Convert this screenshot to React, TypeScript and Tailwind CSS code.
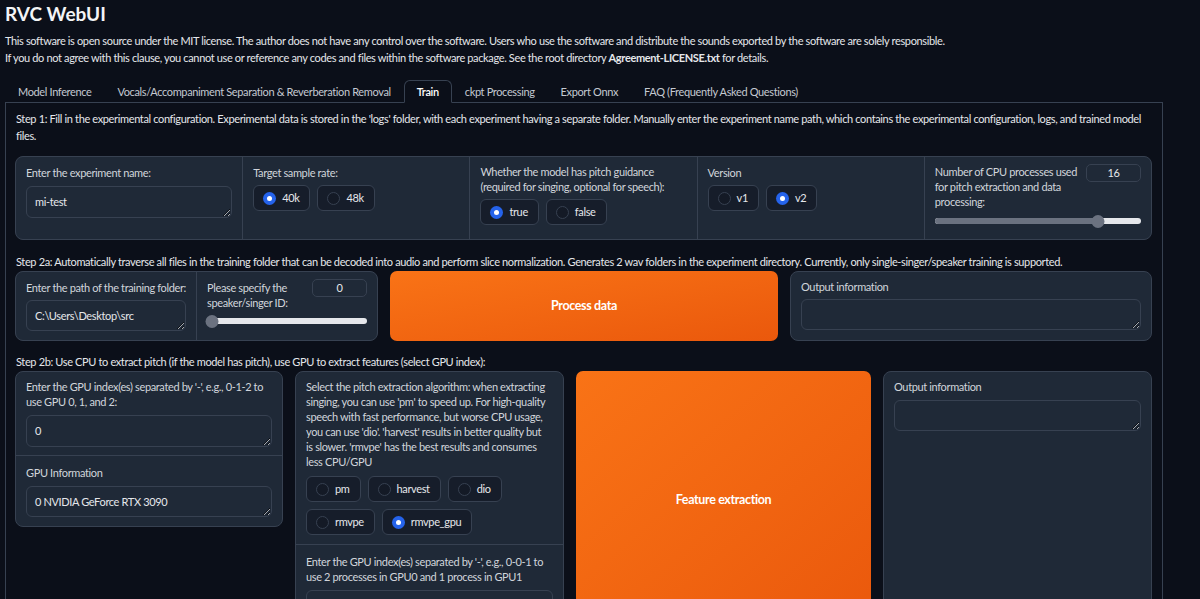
import { useState } from 'react';

const TABS = [
  'Model Inference',
  'Vocals/Accompaniment Separation & Reverberation Removal',
  'Train',
  'ckpt Processing',
  'Export Onnx',
  'FAQ (Frequently Asked Questions)',
];

function Radio({ label, checked, onSelect }: { label: string; checked: boolean; onSelect: () => void }) {
  return (
    <button
      onClick={onSelect}
      className="flex h-[26px] items-center gap-[6px] rounded-[6px] border border-[#374151] bg-[#161d2a] pl-[9px] pr-[10px] text-[#e5e7eb]"
    >
      <span
        className={`flex h-[13px] w-[13px] items-center justify-center rounded-full ${
          checked ? 'bg-[#2563eb]' : 'border border-[#374151] bg-[#141a26]'
        }`}
      >
        {checked && <span className="h-[5px] w-[5px] rounded-full bg-white" />}
      </span>
      {label}
    </button>
  );
}

function RadioGroup({ options, initial }: { options: string[]; initial: string }) {
  const [value, setValue] = useState(initial);
  return (
    <div className="flex flex-wrap gap-[7px]">
      {options.map((o) => (
        <Radio key={o} label={o} checked={value === o} onSelect={() => setValue(o)} />
      ))}
    </div>
  );
}

function Box({ value, h = 'h-[32px]' }: { value: string; h?: string }) {
  return (
    <textarea
      readOnly
      rows={1}
      value={value}
      className={`${h} w-full shrink-0 overflow-hidden rounded-[6px] border border-[#374151] bg-[#1f2937] px-[8px] py-[7px] leading-[16px] text-[#e5e7eb] outline-none [color-scheme:dark]`}
    />
  );
}

function NumberBox({ value }: { value: number }) {
  return (
    <div className="flex h-[18px] w-[55px] shrink-0 items-center justify-center rounded-[5px] border border-[#374151] text-[#e5e7eb]">
      {value}
    </div>
  );
}

function Slider({ value, min, max }: { value: number; min: number; max: number }) {
  const pct = ((value - min) / (max - min)) * 100;
  return (
    <div className="relative flex h-[20px] items-center">
      <div className="h-[6px] w-full rounded-full bg-[#e5e7eb]">
        <div className="h-full rounded-full bg-[#6b7280]" style={{ width: `${pct}%` }} />
      </div>
      <div
        className="absolute h-[13px] w-[13px] -translate-x-1/2 rounded-full bg-[#6b7280]"
        style={{ left: `calc(${pct}% + ${pct === 0 ? 5 : 0}px)` }}
      />
    </div>
  );
}

function Label({ children }: { children: React.ReactNode }) {
  return <div className="whitespace-nowrap leading-[15px] text-[#d1d5db]">{children}</div>;
}

function OrangeButton({ children, className }: { children: React.ReactNode; className: string }) {
  return (
    <button
      className={`${className} flex items-center justify-center rounded-[7px] bg-gradient-to-br from-[#f97316] to-[#ea580c] text-[12.5px] font-bold text-white`}
    >
      {children}
    </button>
  );
}

export default function App() {
  const [tab, setTab] = useState('Train');

  return (
    <div className="min-h-screen bg-[#0b0f19] pb-10 text-[11px] tracking-[-0.36px] text-[#e5e7eb] [font-family:Lato,'Noto_Sans',sans-serif]">
      <div className="ml-[5px] w-[1158px]">
        <h1 className="pt-[2px] text-[19px] font-bold leading-[24px] tracking-normal text-[#f3f4f6]">RVC WebUI</h1>
        <p className="mt-[6px] leading-[17px]">
          This software is open source under the MIT license. The author does not have any control over the software. Users who use the software and distribute the sounds exported by the software are solely responsible.
          <br />
          If you do not agree with this clause, you cannot use or reference any codes and files within the software package. See the root directory <b>Agreement-LICENSE.txt</b> for details.
        </p>

        {/* tab bar */}
        <div className="mt-[14px] flex border-b border-[#374151]">
          {TABS.map((t) => (
            <button
              key={t}
              onClick={() => setTab(t)}
              className={`-mb-px h-[23px] rounded-t-[6px] border px-[12px] leading-[21px] ${
                tab === t
                  ? 'border-[#374151] border-b-[#0b0f19] bg-[#0b0f19] font-semibold text-white'
                  : 'border-transparent text-[#c4c9d1]'
              }`}
            >
              {t}
            </button>
          ))}
        </div>

        <div className="border-x border-[#374151] pl-[9px] pr-[10px]">
          <p className="pl-px pt-[7px] leading-[17px]">
            Step 1: Fill in the experimental configuration. Experimental data is stored in the 'logs' folder, with each experiment having a separate folder. Manually enter the experiment name path, which contains the experimental configuration, logs, and trained model
            <br />
            files.
          </p>

          {/* step 1 settings */}
          <div className="mt-[12px] grid h-[84px] grid-cols-5 gap-px overflow-hidden rounded-[8px] border border-[#374151] bg-[#374151]">
            <div className="flex flex-col gap-[6px] bg-[#1f2937] px-[10px] pt-[8px]">
              <Label>Enter the experiment name:</Label>
              <Box value="mi-test" />
            </div>
            <div className="flex flex-col gap-[5px] bg-[#1f2937] px-[10px] pt-[8px]">
              <Label>Target sample rate:</Label>
              <RadioGroup options={['40k', '48k']} initial="40k" />
            </div>
            <div className="flex flex-col gap-[5px] bg-[#1f2937] px-[10px] pt-[7px]">
              <Label>
                Whether the model has pitch guidance
                <br />
                (required for singing, optional for speech):
              </Label>
              <RadioGroup options={['true', 'false']} initial="true" />
            </div>
            <div className="flex flex-col gap-[5px] bg-[#1f2937] px-[10px] pt-[8px]">
              <Label>Version</Label>
              <RadioGroup options={['v1', 'v2']} initial="v2" />
            </div>
            <div className="flex flex-col gap-[2px] bg-[#1f2937] px-[10px] pt-[7px]">
              <div className="flex items-start justify-between">
                <Label>
                  Number of CPU processes used
                  <br />
                  for pitch extraction and data
                  <br />
                  processing:
                </Label>
                <NumberBox value={16} />
              </div>
              <Slider value={16} min={1} max={20} />
            </div>
          </div>

          <p className="mt-[13px] pl-px leading-[17px]">
            Step 2a: Automatically traverse all files in the training folder that can be decoded into audio and perform slice normalization. Generates 2 wav folders in the experiment directory. Currently, only single-singer/speaker training is supported.
          </p>

          {/* step 2a */}
          <div className="mt-px flex h-[70px] gap-[12px]">
            <div className="grid w-[363px] grid-cols-2 gap-px overflow-hidden rounded-[8px] border border-[#374151] bg-[#374151]">
              <div className="flex flex-col gap-[5px] bg-[#1f2937] px-[10px] pt-[8px]">
                <Label>Enter the path of the training folder:</Label>
                <Box value={'C:\\Users\\Desktop\\src'} h="h-[31px]" />
              </div>
              <div className="flex flex-col bg-[#1f2937] px-[10px] pt-[7px]">
                <div className="flex items-start justify-between">
                  <div className="pt-px">
                    <Label>
                      Please specify the
                      <br />
                      speaker/singer ID:
                    </Label>
                  </div>
                  <NumberBox value={0} />
                </div>
                <div className="mt-px">
                  <Slider value={0} min={0} max={4} />
                </div>
              </div>
            </div>
            <OrangeButton className="w-[388px]">Process data</OrangeButton>
            <div className="flex flex-1 flex-col gap-[5px] rounded-[8px] border border-[#374151] bg-[#1f2937] px-[10px] pt-[7px]">
              <Label>Output information</Label>
              <Box value="" h="h-[31px]" />
            </div>
          </div>

          <p className="mt-[12px] pl-px leading-[17px]">
            Step 2b: Use CPU to extract pitch (if the model has pitch), use GPU to extract features (select GPU index):
          </p>

          {/* step 2b */}
          <div className="mt-px flex h-[258px] gap-[12px]">
            <div className="w-[268px] self-start overflow-hidden rounded-[8px] border border-[#374151] bg-[#1f2937]">
              <div className="flex flex-col gap-[6px] border-b border-[#374151] px-[10px] pb-[8px] pt-[7px]">
                <Label>
                  Enter the GPU index(es) separated by '-', e.g., 0-1-2 to
                  <br />
                  use GPU 0, 1, and 2:
                </Label>
                <Box value="0" />
              </div>
              <div className="flex flex-col gap-[6px] px-[10px] pb-[9px] pt-[9px]">
                <Label>GPU Information</Label>
                <Box value="0 NVIDIA GeForce RTX 3090" h="h-[31px]" />
              </div>
            </div>

            <div className="w-[269px] overflow-hidden rounded-[8px] border border-[#374151] bg-[#1f2937]">
              <div className="flex flex-col gap-[7px] border-b border-[#374151] px-[10px] pb-[9px] pt-[7px]">
                <Label>
                  Select the pitch extraction algorithm: when extracting
                  <br />
                  singing, you can use 'pm' to speed up. For high-quality
                  <br />
                  speech with fast performance, but worse CPU usage,
                  <br />
                  you can use 'dio'. 'harvest' results in better quality but
                  <br />
                  is slower. 'rmvpe' has the best results and consumes
                  <br />
                  less CPU/GPU
                </Label>
                <RadioGroup options={['pm', 'harvest', 'dio', 'rmvpe', 'rmvpe_gpu']} initial="rmvpe_gpu" />
              </div>
              <div className="flex flex-col gap-[6px] px-[10px] pt-[9px]">
                <Label>
                  Enter the GPU index(es) separated by '-', e.g., 0-0-1 to
                  <br />
                  use 2 processes in GPU0 and 1 process in GPU1
                </Label>
                <Box value="0-0" />
              </div>
            </div>

            <OrangeButton className="w-[295px]">Feature extraction</OrangeButton>

            <div className="flex flex-1 flex-col gap-[6px] rounded-[8px] border border-[#374151] bg-[#1f2937] px-[10px] pt-[7px]">
              <Label>Output information</Label>
              <Box value="" h="h-[31px]" />
            </div>
          </div>
          <div className="h-[12px]" />
        </div>
      </div>
    </div>
  );
}
